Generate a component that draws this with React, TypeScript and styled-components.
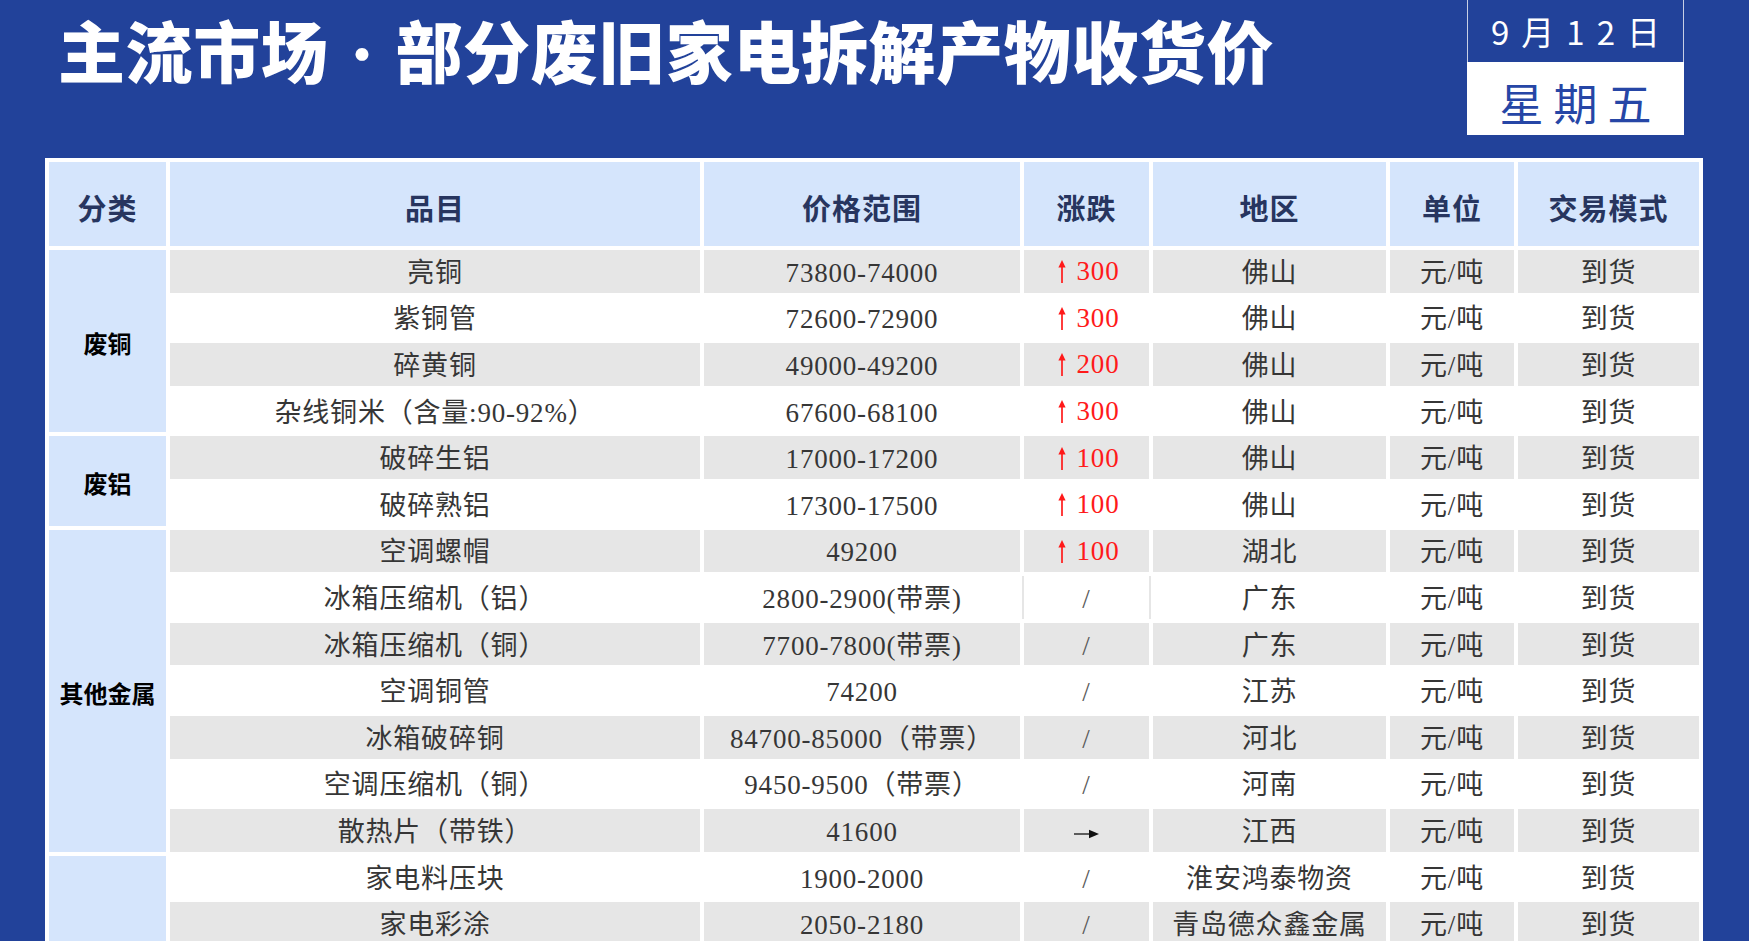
import { createGlobalStyle, styled } from "styled-components";

type Trend = "up" | "flat" | "none";

type Item = {
  name: string;
  price: string;
  trend: Trend;
  change?: string;
  region: string;
  edged?: boolean;
};

type Group = {
  label: string;
  items: Item[];
};

const groups: Group[] = [
  {
    label: "废铜",
    items: [
      { name: "亮铜", price: "73800-74000", trend: "up", change: "300", region: "佛山" },
      { name: "紫铜管", price: "72600-72900", trend: "up", change: "300", region: "佛山" },
      { name: "碎黄铜", price: "49000-49200", trend: "up", change: "200", region: "佛山" },
      { name: "杂线铜米（含量:90-92%）", price: "67600-68100", trend: "up", change: "300", region: "佛山" },
    ],
  },
  {
    label: "废铝",
    items: [
      { name: "破碎生铝", price: "17000-17200", trend: "up", change: "100", region: "佛山" },
      { name: "破碎熟铝", price: "17300-17500", trend: "up", change: "100", region: "佛山" },
    ],
  },
  {
    label: "其他金属",
    items: [
      { name: "空调螺帽", price: "49200", trend: "up", change: "100", region: "湖北" },
      { name: "冰箱压缩机（铝）", price: "2800-2900(带票)", trend: "none", region: "广东", edged: true },
      { name: "冰箱压缩机（铜）", price: "7700-7800(带票)", trend: "none", region: "广东" },
      { name: "空调铜管", price: "74200", trend: "none", region: "江苏" },
      { name: "冰箱破碎铜", price: "84700-85000（带票）", trend: "none", region: "河北" },
      { name: "空调压缩机（铜）", price: "9450-9500（带票）", trend: "none", region: "河南" },
      { name: "散热片（带铁）", price: "41600", trend: "flat", region: "江西" },
    ],
  },
  {
    label: "",
    items: [
      { name: "家电料压块", price: "1900-2000", trend: "none", region: "淮安鸿泰物资" },
      { name: "家电彩涂", price: "2050-2180", trend: "none", region: "青岛德众鑫金属" },
    ],
  },
];

const columns = ["分类", "品目", "价格范围", "涨跌", "地区", "单位", "交易模式"];
const widths = [117, 530, 316, 125, 233, 124, 181];

const UpArrow = () => (
  <svg width="8" height="23" viewBox="0 0 8 23">
    <line x1="4" y1="5" x2="4" y2="23" stroke="#ff1a1a" strokeWidth="1.7" />
    <polygon points="4,0 7.6,7.5 0.4,7.5" fill="#ff1a1a" />
  </svg>
);

const RightArrow = () => (
  <svg width="25" height="10" viewBox="0 0 25 10">
    <line x1="0" y1="5" x2="17" y2="5" stroke="#444" strokeWidth="1.7" />
    <polygon points="25,5 15,0.8 15,9.2" fill="#111" />
  </svg>
);

const TrendMark = ({ item }: { item: Item }) => {
  if (item.trend === "up") {
    return (
      <Rise>
        <UpArrow />
        {item.change}
      </Rise>
    );
  }
  if (item.trend === "flat") {
    return (
      <Flat>
        <RightArrow />
      </Flat>
    );
  }
  return <Slash>/</Slash>;
};

const App = () => {
  let rowIndex = 0;

  return (
    <>
      <GlobalStyle />
      <Page>
        <Header>
          <Title>
            主流市场<Dot>·</Dot>部分废旧家电拆解产物收货价
          </Title>
          <DateBox>
            <DateDay>9月12日</DateDay>
            <DateWeek>星期五</DateWeek>
          </DateBox>
        </Header>
        <Table>
          <colgroup>
            {widths.map((w, i) => (
              <col key={i} style={{ width: w }} />
            ))}
          </colgroup>
          <thead>
            <tr>
              {columns.map((c) => (
                <HeadCell key={c}>{c}</HeadCell>
              ))}
            </tr>
          </thead>
          <tbody>
            {groups.map((group, gi) =>
              group.items.map((item, ii) => {
                const shaded = rowIndex % 2 === 0;
                rowIndex += 1;
                return (
                  <tr key={`${gi}-${ii}`}>
                    {ii === 0 && (
                      <CategoryCell rowSpan={group.items.length}>{group.label}</CategoryCell>
                    )}
                    <Cell $shaded={shaded}>{item.name}</Cell>
                    <Cell $shaded={shaded}>{item.price}</Cell>
                    <Cell $shaded={shaded} $edged={item.edged}>
                      <TrendMark item={item} />
                    </Cell>
                    <Cell $shaded={shaded}>{item.region}</Cell>
                    <Cell $shaded={shaded}>元/吨</Cell>
                    <Cell $shaded={shaded}>到货</Cell>
                  </tr>
                );
              })
            )}
          </tbody>
        </Table>
      </Page>
    </>
  );
};

export default App;

const GlobalStyle = createGlobalStyle`
  html, body {
    margin: 0;
    padding: 0;
    overflow: hidden;
  }
  body {
    font-family: "Noto Sans CJK SC", "Noto Sans", sans-serif;
    background: #22429a;
  }
`;

const Page = styled.div`
  width: 1749px;
  height: 941px;
  overflow: hidden;
  background: #22429a;
`;

const Header = styled.header`
  height: 158px;
  display: flex;
  justify-content: space-between;
  align-items: flex-start;
  padding: 0 65px 0 58px;
  box-sizing: border-box;
`;

const Title = styled.h1`
  margin: 15px 0 0;
  font-family: "Noto Sans CJK SC", sans-serif;
  font-size: 67px;
  line-height: 1;
  font-weight: 900;
  letter-spacing: 0.6px;
  color: #ffffff;
  white-space: nowrap;
`;

const Dot = styled.span`
  display: inline-block;
  width: 67px;
  text-align: center;
  letter-spacing: 0;
  font-size: 50px;
  font-weight: 700;
  vertical-align: 5px;
`;

const DateBox = styled.div`
  width: 217px;
  display: flex;
  flex-direction: column;
`;

const DateDay = styled.div`
  height: 62px;
  border: 1px solid #c7cfe4;
  border-top: none;
  border-bottom: none;
  box-sizing: border-box;
  display: flex;
  align-items: center;
  justify-content: center;
  padding-left: 12px;
  font-size: 33px;
  letter-spacing: 12px;
  color: #ffffff;
  font-weight: 400;
`;

const DateWeek = styled.div`
  height: 73px;
  background: #ffffff;
  display: flex;
  align-items: center;
  justify-content: center;
  padding: 6px 0 0 10px;
  box-sizing: border-box;
  font-size: 44px;
  letter-spacing: 10px;
  color: #2646a6;
  font-weight: 400;
`;

const Table = styled.table`
  margin-left: 45px;
  width: 1657px;
  table-layout: fixed;
  border-collapse: separate;
  border-spacing: 4px;
  background: #ffffff;
`;

const HeadCell = styled.th`
  height: 84px;
  box-sizing: border-box;
  padding: 5px 0 0;
  background: #d5e5fc;
  color: #27355f;
  font-family: "Noto Sans CJK SC", sans-serif;
  font-size: 29px;
  font-weight: 700;
  text-align: center;
  vertical-align: middle;
  letter-spacing: 1px;
`;

const CategoryCell = styled.td`
  background: #d5e5fc;
  color: #000000;
  font-family: "Noto Sans CJK SC", sans-serif;
  font-size: 24px;
  font-weight: 700;
  text-align: center;
  vertical-align: middle;
  padding: 3px 0 0;
`;

const Cell = styled.td<{ $shaded: boolean; $edged?: boolean }>`
  height: 42.6px;
  box-sizing: border-box;
  padding: 4px 0 0;
  background: ${({ $shaded }) => ($shaded ? "#e6e6e6" : "#ffffff")};
  box-shadow: ${({ $edged }) => ($edged ? "-2px 0 0 #e6e6e6, 2px 0 0 #e6e6e6" : "none")};
  color: #363636;
  font-family: "Liberation Serif", "Noto Sans CJK SC", serif;
  font-size: 27px;
  letter-spacing: 0.8px;
  line-height: 1;
  text-align: center;
  vertical-align: middle;
  white-space: nowrap;
`;

const Rise = styled.span`
  display: inline-flex;
  align-items: center;
  gap: 11px;
  color: #ff1a1a;
  padding-left: 4px;
`;

const Flat = styled.span`
  display: inline-flex;
  align-items: center;
  height: 27px;
`;

const Slash = styled.span`
  color: #5a5a5a;
`;
